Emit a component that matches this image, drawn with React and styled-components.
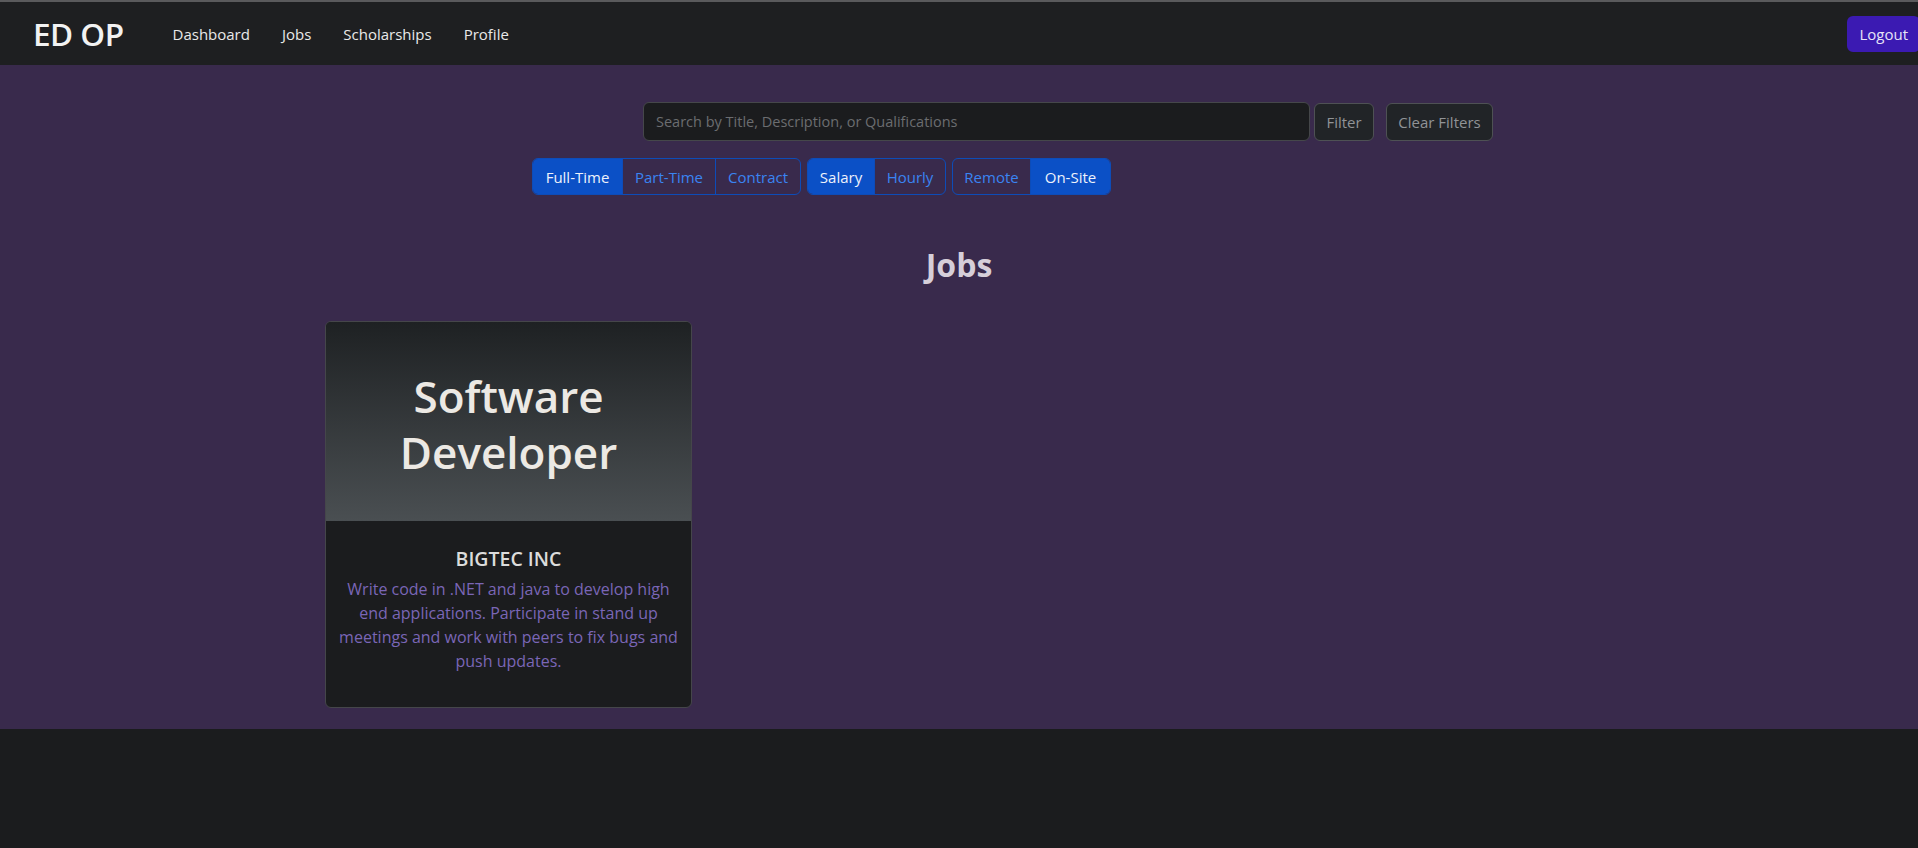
import React from "react";
import styled, { createGlobalStyle } from "styled-components";

const GlobalStyle = createGlobalStyle`
  html, body {
    margin: 0;
    padding: 0;
    background: #1b1c1e;
    font-family: "Open Sans", "Noto Sans", "Liberation Sans", sans-serif;
    overflow: hidden;
  }
  * {
    box-sizing: border-box;
  }
`;

const Navbar = styled.nav`
  height: 65px;
  border-top: 2px solid #5a5a5c;
  background: #1e1f21;
  display: flex;
  align-items: center;
  padding-left: 33px;
`;

const Brand = styled.a`
  font-size: 31.5px;
  font-weight: 600;
  color: #f2f2f2;
  text-decoration: none;
  margin-right: 49px;
  letter-spacing: -0.5px;
`;

const NavLinks = styled.div`
  display: flex;
  gap: 32px;
`;

const NavLink = styled.a`
  font-size: 15px;
  color: #e9e9e9;
  text-decoration: none;
`;

const LogoutButton = styled.button`
  margin-left: auto;
  margin-right: -2px;
  height: 36px;
  padding: 0 12px;
  border: none;
  border-radius: 6px;
  background: #3b1ab2;
  color: #e6e3f7;
  font-family: inherit;
  font-size: 15px;
`;

const Main = styled.main`
  background: #392a4c;
  height: 664px;
  padding-top: 37px;
`;

const SearchRow = styled.form`
  display: flex;
  align-items: center;
  padding-left: 643px;
`;

const SearchInput = styled.input`
  width: 667px;
  height: 39px;
  background: #1b1c1e;
  border: 1px solid #45474a;
  border-radius: 6px;
  padding: 0 12px;
  font-family: inherit;
  font-size: 14.5px;
  color: #ddd;
  &::placeholder {
    color: #6b6d70;
  }
`;

const GreyButton = styled.button`
  height: 38px;
  width: ${(p) => p.$w}px;
  margin-left: ${(p) => p.$ml}px;
  background: #212427;
  border: 1px solid #4e5154;
  border-radius: 6px;
  color: #909396;
  font-family: inherit;
  font-size: 15px;
  padding: 0;
`;

const ToggleRow = styled.div`
  display: flex;
  gap: 6px;
  padding-left: 532px;
  margin-top: 17px;
`;

const ToggleGroup = styled.div`
  display: flex;
  border: 1px solid #0d4cb8;
  border-radius: 6px;
  overflow: hidden;
`;

const Toggle = styled.button`
  height: 35px;
  width: ${(p) => p.$w}px;
  padding: 0;
  border: none;
  border-left: 1px solid #0d4cb8;
  &:first-child {
    border-left: none;
  }
  background: ${(p) => (p.$active ? "#0b50c6" : "transparent")};
  color: ${(p) => (p.$active ? "#eef2fb" : "#3a84f2")};
  font-family: inherit;
  font-size: 15px;
`;

const Title = styled.h2`
  margin: 52px 0 0;
  text-align: center;
  font-size: 32px;
  font-weight: 700;
  line-height: 36px;
  color: #d6cfd9;
`;

const CardGrid = styled.div`
  display: grid;
  grid-template-columns: 367px;
  padding-left: 325px;
  margin-top: 38px;
`;

const Card = styled.div`
  height: 387px;
  border: 1px solid #45464a;
  border-radius: 6px;
  overflow: hidden;
  display: flex;
  flex-direction: column;
  background: #1b1c1e;
`;

const CardHeader = styled.div`
  height: 199px;
  background: linear-gradient(180deg, #1e2123 0%, #4a4f52 100%);
  display: flex;
  align-items: center;
  justify-content: center;
  text-align: center;
  padding: 4px 20px 0;
`;

const HeaderTitle = styled.h1`
  margin: 0;
  font-size: 44px;
  font-weight: 600;
  line-height: 56px;
  color: #ece9e4;
`;

const CardBody = styled.div`
  flex: 1;
  padding: 26px 11px 0;
  text-align: center;
`;

const Company = styled.h5`
  margin: 0 0 6px;
  font-size: 19.5px;
  font-weight: 600;
  line-height: 24px;
  color: #dcdcdc;
`;

const Description = styled.p`
  margin: 0;
  font-size: 16px;
  line-height: 24px;
  color: #7a66b6;
`;

const Footer = styled.div`
  height: 119px;
  background: #1b1c1e;
`;

const jobTypes = [
  { label: "Full-Time", w: 89, active: true },
  { label: "Part-Time", w: 93 },
  { label: "Contract", w: 85 },
];
const payTypes = [
  { label: "Salary", w: 66, active: true },
  { label: "Hourly", w: 71 },
];
const locations = [
  { label: "Remote", w: 77 },
  { label: "On-Site", w: 80, active: true },
];

const jobs = [
  {
    id: 1,
    title: "Software Developer",
    company: "BIGTEC INC",
    description:
      "Write code in .NET and java to develop high end applications. Participate in stand up meetings and work with peers to fix bugs and push updates.",
  },
];

const Group = ({ items }) => (
  <ToggleGroup>
    {items.map((item) => (
      <Toggle key={item.label} $w={item.w} $active={item.active}>
        {item.label}
      </Toggle>
    ))}
  </ToggleGroup>
);

export default function App() {
  return (
    <>
      <GlobalStyle />
      <Navbar>
        <Brand href="#">ED OP</Brand>
        <NavLinks>
          <NavLink href="#">Dashboard</NavLink>
          <NavLink href="#">Jobs</NavLink>
          <NavLink href="#">Scholarships</NavLink>
          <NavLink href="#">Profile</NavLink>
        </NavLinks>
        <LogoutButton>Logout</LogoutButton>
      </Navbar>
      <Main>
        <SearchRow onSubmit={(e) => e.preventDefault()}>
          <SearchInput placeholder="Search by Title, Description, or Qualifications" />
          <GreyButton type="submit" $w={60} $ml={4}>
            Filter
          </GreyButton>
          <GreyButton type="button" $w={107} $ml={12}>
            Clear Filters
          </GreyButton>
        </SearchRow>
        <ToggleRow>
          <Group items={jobTypes} />
          <Group items={payTypes} />
          <Group items={locations} />
        </ToggleRow>
        <Title>Jobs</Title>
        <CardGrid>
          {jobs.map((job) => (
            <Card key={job.id}>
              <CardHeader>
                <HeaderTitle>{job.title}</HeaderTitle>
              </CardHeader>
              <CardBody>
                <Company>{job.company}</Company>
                <Description>{job.description}</Description>
              </CardBody>
            </Card>
          ))}
        </CardGrid>
      </Main>
      <Footer />
    </>
  );
}
